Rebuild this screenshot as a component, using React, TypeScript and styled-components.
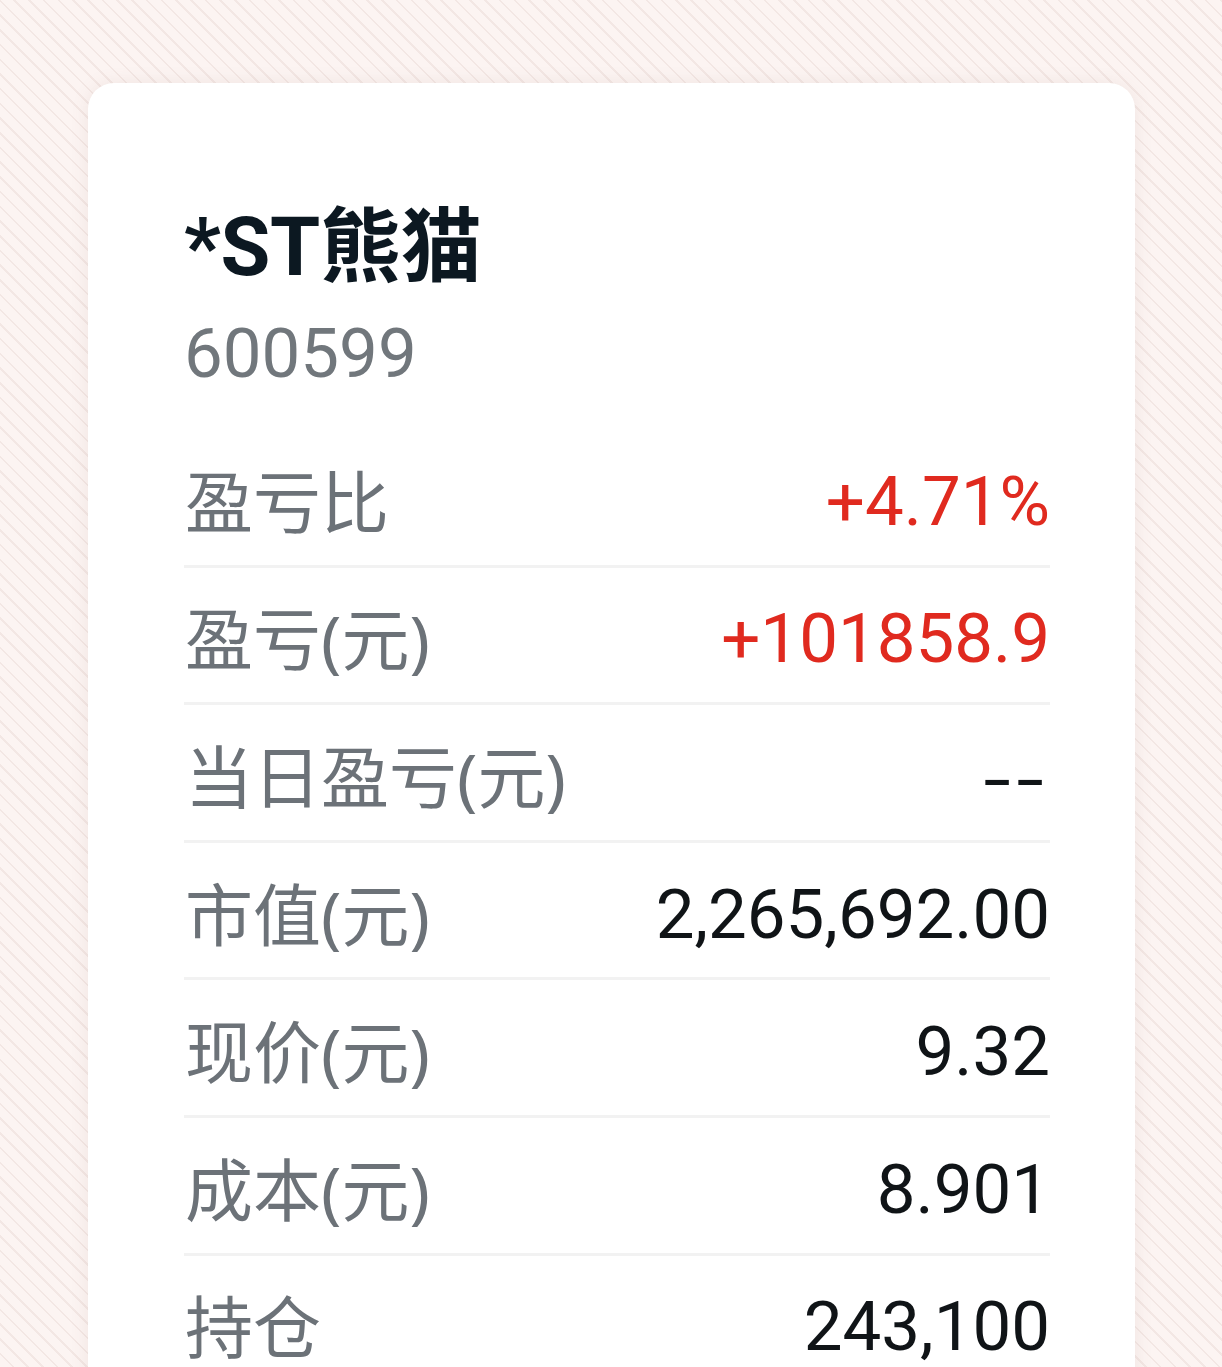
import React from "react";
import styled, { createGlobalStyle } from "styled-components";

const GlobalStyle = createGlobalStyle`
  html, body {
    margin: 0;
    padding: 0;
    height: 100%;
    overflow: hidden;
  }
  body {
    font-family: Roboto, "Noto Sans CJK SC", sans-serif;
    background-color: #fcf4f2;
    background-image: repeating-linear-gradient(
      45deg,
      #fcf4f2 0px,
      #fcf4f2 8.6px,
      #f3e7e4 8.6px,
      #f3e7e4 10.4px
    );
  }
`;

const Page = styled.div`
  padding: 83px 87px 0 88px;
  height: 1367px;
  box-sizing: border-box;
  overflow: hidden;
`;

const Card = styled.div`
  background: #ffffff;
  border-radius: 26px;
  box-shadow: 0 0 18px rgba(140, 100, 90, 0.1);
  padding: 125px 85px 40px 96px;
  min-height: 1400px;
  box-sizing: border-box;
`;

const Title = styled.h1`
  margin: 0;
  font-family: Roboto, "Noto Sans CJK SC", sans-serif;
  font-size: 81px;
  line-height: 80px;
  font-weight: 700;
  color: #0c1821;
  letter-spacing: -0.3px;
`;

const Code = styled.div`
  margin-top: 32px;
  font-family: Roboto, "Noto Sans CJK SC", sans-serif;
  font-size: 69px;
  line-height: 68px;
  color: #71777c;
`;

const List = styled.div`
  margin-top: 42px;
  display: flex;
  flex-direction: column;
`;

const Row = styled.div`
  display: flex;
  align-items: center;
  justify-content: space-between;
  height: 137.6px;
  box-sizing: border-box;
  padding-top: 9px;
  border-bottom: 3px solid #f2f2f2;
`;

const Label = styled.span`
  font-family: "Noto Sans", "Noto Sans CJK SC", sans-serif;
  font-size: 68px;
  line-height: 68px;
  color: #6c7278;
  margin-left: 1px;
`;

const Value = styled.span<{ $tone: "up" | "plain" }>`
  font-family: Roboto, "Noto Sans CJK SC", sans-serif;
  font-size: 69px;
  line-height: 68px;
  color: ${(p) => (p.$tone === "up" ? "#e02a1f" : "#101417")};
`;

const Dash = styled.span`
  display: inline-block;
  font-family: Roboto, sans-serif;
  font-size: 68px;
  line-height: 68px;
  color: #101417;
  letter-spacing: 4px;
  transform: scaleX(1.45) translateY(3px);
  transform-origin: right center;
`;

const rows: { label: string; value: string; tone: "up" | "plain" | "none" }[] = [
  { label: "盈亏比", value: "+4.71%", tone: "up" },
  { label: "盈亏(元)", value: "+101858.9", tone: "up" },
  { label: "当日盈亏(元)", value: "--", tone: "none" },
  { label: "市值(元)", value: "2,265,692.00", tone: "plain" },
  { label: "现价(元)", value: "9.32", tone: "plain" },
  { label: "成本(元)", value: "8.901", tone: "plain" },
  { label: "持仓", value: "243,100", tone: "plain" },
];

export default function App() {
  return (
    <>
      <GlobalStyle />
      <Page>
        <Card>
          <Title>*ST熊猫</Title>
          <Code>600599</Code>
          <List>
            {rows.map((r) => (
              <Row key={r.label}>
                <Label>{r.label}</Label>
                {r.tone === "none" ? (
                  <Dash>{r.value}</Dash>
                ) : (
                  <Value $tone={r.tone}>{r.value}</Value>
                )}
              </Row>
            ))}
          </List>
        </Card>
      </Page>
    </>
  );
}
